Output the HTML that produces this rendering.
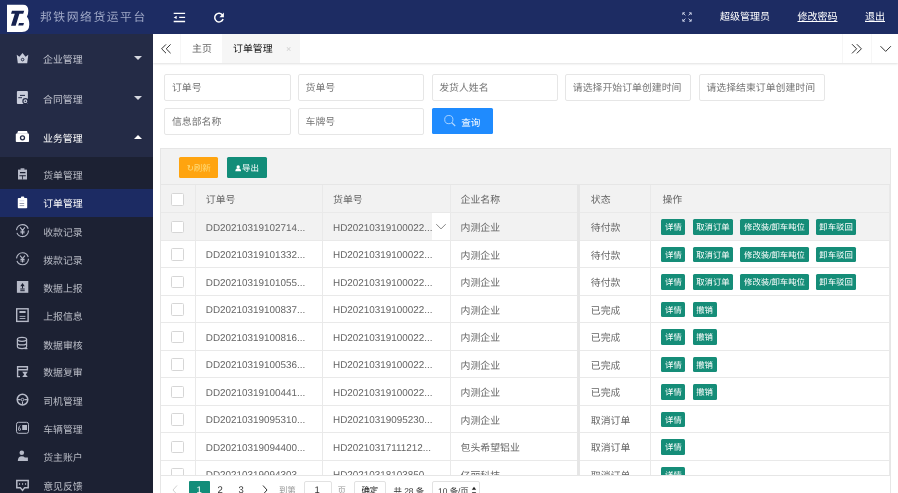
<!DOCTYPE html>
<html lang="zh-CN">
<head>
<meta charset="utf-8">
<title>邦铁网络货运平台</title>
<style>
*{box-sizing:border-box;margin:0;padding:0}
html,body{text-rendering:geometricPrecision;width:898px;height:493px;overflow:hidden;background:#fff;font-family:"Liberation Sans",sans-serif;font-size:9.8px;color:#666}
#app{position:relative;width:898px;height:493px;overflow:hidden;will-change:transform}
.abs{position:absolute}
/* header */
#hdr{left:0;top:0;width:898px;height:33.6px;background:#1d2c63;z-index:5}
#logo{left:7px;top:5px;width:23px;height:28px}
#title{left:40px;top:9px;font-size:11.8px;letter-spacing:1.55px;color:#9ea7c6;white-space:nowrap;line-height:16px}
.hr{top:11.2px;color:#fff;font-size:10px;line-height:14px;white-space:nowrap}
.hr.u{text-decoration:underline}
/* sidebar */
#side{left:0;top:33.6px;width:152.5px;height:460px;background:#242b46;z-index:4}
.top{position:absolute;left:0;width:152.5px;height:39.5px;line-height:39.5px;color:#c2c5d0;font-size:9.9px}
.top span{position:absolute;left:43px;top:2.2px}
.top .ic{position:absolute;left:16px;top:12px;width:14px;height:14px}
.top .ar{position:absolute;left:133.6px;top:17px;width:0;height:0;border-left:4.5px solid transparent;border-right:4.5px solid transparent;border-top:4.5px solid #d5d8e0}
.top .ar.up{border-top:none;border-bottom:4.5px solid #fff}
#child{left:0;top:123.6px;width:152.5px;height:340px;background:#1c2133}
.ci{position:absolute;left:0;width:152.5px;height:28.2px;line-height:28.2px;color:#b9bcc6;font-size:9.9px}
.ci span{position:absolute;left:43.2px;top:1.7px}
.ci .ic{position:absolute;left:15px;top:7px;width:14px;height:14px}
.ci.on{background:#1c2b63;color:#fff}
/* tabs */
#tabs{left:152.5px;top:33.6px;width:745.5px;height:29.4px;background:#fff;box-shadow:0 1px 2px rgba(0,0,0,.12);z-index:3}
.tab{position:absolute;top:0;height:29.4px;line-height:32.6px;font-size:9.9px;color:#666}
.vl{position:absolute;top:0;width:1px;height:29.4px;background:#f6f6f6}
/* form */
.inp{position:absolute;height:27px;width:126.3px;padding-top:1.8px;border:1px solid #e6e6e6;border-radius:2px;background:#fff;font-size:9.9px;color:#757575;line-height:24.5px;padding-left:6.6px;white-space:nowrap}
#sbtn{left:431.7px;top:108px;width:61.5px;height:26.3px;background:#1f8bfe;border-radius:1.5px;color:#fff;font-size:9.6px;line-height:32.4px}
/* table */
#tbox{left:160px;top:148.2px;width:731px;height:360px;border:1px solid #e6e6e6;background:#fff}
#tool{left:0;top:0;width:729px;height:36px;background:#f2f2f2;border-bottom:1px solid #e6e6e6}
.btn{position:absolute;top:8px;height:21px;line-height:23px;border-radius:1.5px;color:#fff;font-size:8.5px;text-align:center;white-space:nowrap}
table{border-collapse:collapse;table-layout:fixed;position:absolute;left:0;top:36px}
td,th{height:27.52px;border-right:1px solid #e9e9e9;border-bottom:1px solid #e9e9e9;font-size:9.9px;font-weight:normal;text-align:left;padding:1.2px 0 0 9.7px;color:#666;white-space:nowrap;overflow:hidden}
th{background:#f2f2f2;color:#666}
tr.hv td{background:#f2f2f2}
td:nth-child(2),td:nth-child(3){padding-top:3.2px}
.cb{display:block;width:13px;height:12.5px;border:1px solid #d6d6d6;border-radius:1.5px;background:#fff;margin-left:0.8px}
.ob{display:inline-block;height:15.5px;line-height:17.4px;overflow:hidden;padding:0 3.6px;background:#158d78;color:#fff;font-size:8.4px;border-radius:1.5px;margin-right:7.2px;vertical-align:middle}
#dd{left:270.7px;top:64px;width:18px;height:26.5px;background:#fff}
td.st,th.st{border-left:3px solid #e6e6e6;padding-left:11.2px}
th.op{padding-left:11.4px}
td:last-child{padding-left:10.4px}
/* pager */
#pager{left:160px;top:475.1px;width:731px;height:20px;background:#fff;border:1px solid #e6e6e6;z-index:2}
.pg{position:absolute;top:8.2px;font-size:9.5px;line-height:14px;color:#333;white-space:nowrap}
</style>
</head>
<body>
<div id="app">
<div id="hdr" class="abs">
<svg class="abs" style="left:0;top:0" width="60" height="34" viewBox="0 0 60 34">
<path d="M7 4.8H23Q28.3 4.8 28.3 10.6Q28.3 14.8 26.9 16.8Q29.3 19.2 29.3 24.6Q29.3 32.1 22 32.1H7Z" fill="#fff"/>
<path d="M12 10.8H24.2L23.2 13.8H19.4L15.7 25.7H11L14.8 13.8H11Z" fill="#16224f"/>
<path d="M19 23H24L23.2 25.6H18.2Z" fill="#16224f"/>
</svg>
<div id="title" class="abs">邦铁网络货运平台</div>
<svg class="abs" style="left:170px;top:8px" width="20" height="20" viewBox="0 0 20 20">
<g stroke="#fff" stroke-width="1.3" fill="none"><path d="M3.7 5.3H15.1M9.2 9.4H15.1M3.7 13.5H15.1"/></g>
<path d="M3.7 9.4L6.7 7.7V11.1Z" fill="#fff"/>
</svg>
<svg class="abs" style="left:209px;top:8px" width="20" height="20" viewBox="0 0 20 20">
<path d="M13.6 7.2A4.3 4.3 0 1 0 14.1 11" stroke="#fff" stroke-width="1.5" fill="none"/>
<path d="M14.9 4.6V9.2H10.4Z" fill="#fff"/>
</svg>
<svg class="abs" style="left:680px;top:10px" width="14" height="14" viewBox="0 0 14 14">
<g stroke="#cfd5ea" stroke-width="0.9" fill="none"><path d="M2.8 5V2.8H5M9 2.8H11.2V5M11.2 9V11.2H9M5 11.2H2.8V9M2.8 2.8L5.4 5.4M11.2 2.8L8.6 5.4M11.2 11.2L8.6 8.6M2.8 11.2L5.4 8.6"/></g>
</svg>
<div class="abs hr" style="left:720px">超级管理员</div>
<div class="abs hr u" style="left:797.5px">修改密码</div>
<div class="abs hr u" style="left:865px">退出</div>
</div>
<div id="side" class="abs">
<div class="top" style="top:5.65px"><span>企业管理</span><i class="ar "></i></div>
<div class="top" style="top:45.15px"><span>合同管理</span><i class="ar "></i></div>
<div class="top" style="top:84.65px;color:#fff"><span>业务管理</span><i class="ar up"></i></div>
<div id="child" class="abs">
<div class="ci" style="top:3.50px"><span style="top:2.7px">货单管理</span></div>
<div class="ci on" style="top:31.68px"><span style="top:1.7px">订单管理</span></div>
<div class="ci" style="top:59.86px"><span style="top:2.7px">收款记录</span></div>
<div class="ci" style="top:88.04px"><span style="top:2.7px">拨款记录</span></div>
<div class="ci" style="top:116.22px"><span style="top:2.7px">数据上报</span></div>
<div class="ci" style="top:144.40px"><span style="top:2.7px">上报信息</span></div>
<div class="ci" style="top:172.58px"><span style="top:3.7px">数据审核</span></div>
<div class="ci" style="top:200.76px"><span style="top:1.7px">数据复审</span></div>
<div class="ci" style="top:228.94px"><span style="top:2.7px">司机管理</span></div>
<div class="ci" style="top:257.12px"><span style="top:2.7px">车辆管理</span></div>
<div class="ci" style="top:285.30px"><span style="top:2.7px">货主账户</span></div>
<div class="ci" style="top:313.48px"><span style="top:3.7px">意见反馈</span></div>
</div>
</div>
<svg class="abs" style="left:0;top:0;z-index:6" width="40" height="493" viewBox="0 0 40 493">
<path d="M16.7 54.7L19.4 56.7L22.5 52.9L25.6 56.7L28.3 54.7L27.2 63.2H17.8Z" fill="#c9cddb"/>
<circle cx="22.6" cy="59.6" r="1.3" fill="#c9cddb" stroke="#242b46" stroke-width="1"/>
<rect x="16.9" y="91.1" width="11" height="12.8" rx="1" fill="#c9cddb"/>
<path d="M20 95.4H25M18.3 97.7H22" stroke="#242b46" stroke-width="1"/>
<circle cx="25.4" cy="101.2" r="2.5" fill="#c9cddb" stroke="#242b46" stroke-width="1.2"/>
<circle cx="25.4" cy="101.2" r="0.8" fill="#242b46"/>
<path d="M17.1 133.8L18 131.1H27L27.9 133.8Z" fill="#fff"/>
<rect x="15.8" y="133.6" width="13.2" height="8.5" rx="0.8" fill="#fff"/>
<circle cx="22.5" cy="137.8" r="2" fill="#fff" stroke="#242b46" stroke-width="1.3"/>
<rect x="18" y="169.6" width="9" height="9.9" fill="#b6bac8"/>
<rect x="20.6" y="168.3" width="3.8" height="1.6" fill="#b6bac8"/>
<path d="M20 172.6H25.4M19.4 175.7H25.8" stroke="#1c2133" stroke-width="1.1"/>
<path d="M22.5 175.7V179.5" stroke="#1c2133" stroke-width="0.8"/>
<rect x="17.8" y="197.9" width="9.4" height="10.3" rx="0.8" fill="#fff"/>
<rect x="20.9" y="196.6" width="3.4" height="2.2" rx="1" fill="#fff"/>
<path d="M19.6 200.8H24.2" stroke="#d5d9ea" stroke-width="1"/>
<path d="M19.6 203.5H24.2M19.6 205.6H24.2" stroke="#9a9eb0" stroke-width="1"/>
<g fill="none" stroke="#b6bac8" stroke-width="1.1">
<circle cx="22.5" cy="230.6" r="6" stroke-dasharray="16 2.85"/>
<path d="M20.1 227.4L22.5 230.4L24.9 227.4M22.5 230.4V234.4M20.4 231.2H24.6M20.4 232.8H24.6"/>
<circle cx="22.5" cy="258.8" r="6" stroke-dasharray="16 2.85"/>
<path d="M20.1 255.6L22.5 258.6L24.9 255.6M22.5 258.6V262.6M20.4 259.4H24.6M20.4 261H24.6"/>
</g>
<rect x="16.9" y="281" width="11.4" height="11.8" fill="#b6bac8"/>
<path d="M22.5 283L24.7 286.3H20.3Z" fill="#1c2133"/>
<path d="M22.5 286V288.4M20.3 289H24.7M20.3 290.7H24.7" stroke="#1c2133" stroke-width="1"/>
<rect x="16.7" y="308.8" width="11.4" height="12.6" fill="none" stroke="#b6bac8" stroke-width="1.4"/>
<rect x="19.4" y="311" width="6.2" height="2" fill="#b6bac8"/>
<path d="M19.6 316.4H25.4M19.6 318.5H25.4" stroke="#b6bac8" stroke-width="0.9"/>
<g fill="none" stroke="#b6bac8" stroke-width="1.2">
<ellipse cx="22" cy="339.3" rx="4.6" ry="2"/>
<path d="M17.4 339.3V346.6A4.6 2 0 0 0 26.6 346.6V339.3M17.4 342.9A4.6 2 0 0 0 26.6 342.9"/>
<path d="M24.5 348.6H27.4"/>
</g>
<path d="M20 376.6H17.6V366.8H27.4V369.8H17.6" fill="none" stroke="#b6bac8" stroke-width="1.4"/>
<path d="M22.2 371.8H27.8L25.8 374.4L27.8 377H22.2L24.2 374.4Z" fill="#b6bac8"/>
<g fill="none" stroke="#b6bac8">
<circle cx="22.5" cy="399.6" r="5.3" stroke-width="1.5"/>
<circle cx="22.5" cy="399.6" r="1.3" stroke-width="1"/>
<path d="M17.4 399.6H20.6M24.4 399.6H27.6M22.5 401.4V404.6" stroke-width="1.1"/>
</g>
<rect x="16.5" y="422.3" width="12" height="11" rx="2" fill="none" stroke="#b6bac8" stroke-width="1"/>
<rect x="22.2" y="425" width="4.8" height="5" fill="#b6bac8"/>
<path d="M20.4 425.6Q18.6 426 18.6 428.6A1 1.3 0 1 0 18.7 428.4" fill="none" stroke="#b6bac8" stroke-width="0.9"/>
<circle cx="21.8" cy="452.7" r="2.3" fill="#b6bac8"/>
<path d="M17.8 461Q17.8 456.2 21.8 456.2Q23.9 456.2 24.8 457.6H27.9V461Z" fill="#b6bac8"/>
<path d="M16.8 480.4H28.2V487.8H24.6L22.5 490.4L20.4 487.8H16.8Z" fill="none" stroke="#b6bac8" stroke-width="1.5"/>
<path d="M19 484H20.1M22 484H23.1M25 484H26.1" stroke="#b6bac8" stroke-width="1.6"/>
</svg>

<div id="tabs" class="abs">
<svg class="abs" style="left:5px;top:8.6px" width="16" height="14" viewBox="0 0 16 14"><path d="M8 2.4L3.6 6.8L8 11.2M12.6 2.4L8.2 6.8L12.6 11.2" fill="none" stroke="#333" stroke-width="1"/></svg>
<i class="vl" style="left:27.5px"></i>
<div class="tab" style="left:39.5px">主页</div>
<i class="vl" style="left:69.5px"></i>
<div class="tab" style="left:69.5px;width:78px;background:#f6f6f6;color:#111"><span style="position:absolute;left:11px">订单管理</span><span style="position:absolute;left:64px;top:-1px;color:#d0d0d0;font-size:9px">×</span></div>
<i class="vl" style="left:689.5px"></i>
<svg class="abs" style="left:696px;top:8px" width="16" height="14" viewBox="0 0 16 14"><path d="M3 2.2L7.6 6.8L3 11.4M7.8 2.2L12.4 6.8L7.8 11.4" fill="none" stroke="#333" stroke-width="1"/></svg>
<i class="vl" style="left:718.5px"></i>
<svg class="abs" style="left:725px;top:9px" width="16" height="12" viewBox="0 0 16 12"><path d="M2.5 3.2L7.7 8.4L12.9 3.2" fill="none" stroke="#333" stroke-width="1"/></svg>
</div>
<div class="inp" style="left:164.3px;top:73.9px">订单号</div>
<div class="inp" style="left:298.0px;top:73.9px">货单号</div>
<div class="inp" style="left:431.6px;top:73.9px">发货人姓名</div>
<div class="inp" style="left:565.2px;top:73.9px">请选择开始订单创建时间</div>
<div class="inp" style="left:698.9px;top:73.9px">请选择结束订单创建时间</div>
<div class="inp" style="left:164.3px;top:107.9px">信息部名称</div>
<div class="inp" style="left:298.0px;top:107.9px">车牌号</div>
<div id="sbtn" class="abs"><svg class="abs" style="left:11.3px;top:6.3px" width="14" height="14" viewBox="0 0 14 14"><circle cx="5.8" cy="5.6" r="4.1" fill="none" stroke="#b5d9ff" stroke-width="0.9"/><path d="M8.8 8.6L12.2 12" stroke="#b5d9ff" stroke-width="1.2"/></svg><span style="position:absolute;left:29.6px">查询</span></div>
<div id="tbox" class="abs">
<div id="tool" class="abs"><div class="btn" style="left:18.2px;width:39.2px;background:#ffa40f;color:#ffdc7a">↻刷新</div><div class="btn" style="left:66.4px;width:39.2px;background:#128d79"><svg style="vertical-align:-0.6px;margin-right:0.6px" width="6.4" height="6.4" viewBox="0 0 10 10"><circle cx="5" cy="3" r="2.6" fill="#fff"/><path d="M0.5 9.6Q0.5 5 5 5Q9.5 5 9.5 9.6Z" fill="#fff"/></svg>导出</div></div>
<table><colgroup><col style="width:34.7px"><col style="width:127.3px"><col style="width:127.5px"><col style="width:128px"><col style="width:72.5px"><col style="width:239px"></colgroup>
<tr><th><i class="cb"></i></th><th>订单号</th><th>货单号</th><th>企业名称</th><th class="st">状态</th><th class="op">操作</th></tr>
<tr class="hv"><td><i class="cb"></i></td><td>DD20210319102714...</td><td>HD20210319100022...</td><td>内测企业</td><td class="st">待付款</td><td><span class="ob">详情</span><span class="ob">取消订单</span><span class="ob">修改装/卸车吨位</span><span class="ob">卸车驳回</span></td></tr>
<tr><td><i class="cb"></i></td><td>DD20210319101332...</td><td>HD20210319100022...</td><td>内测企业</td><td class="st">待付款</td><td><span class="ob">详情</span><span class="ob">取消订单</span><span class="ob">修改装/卸车吨位</span><span class="ob">卸车驳回</span></td></tr>
<tr><td><i class="cb"></i></td><td>DD20210319101055...</td><td>HD20210319100022...</td><td>内测企业</td><td class="st">待付款</td><td><span class="ob">详情</span><span class="ob">取消订单</span><span class="ob">修改装/卸车吨位</span><span class="ob">卸车驳回</span></td></tr>
<tr><td><i class="cb"></i></td><td>DD20210319100837...</td><td>HD20210319100022...</td><td>内测企业</td><td class="st">已完成</td><td><span class="ob">详情</span><span class="ob">撤销</span></td></tr>
<tr><td><i class="cb"></i></td><td>DD20210319100816...</td><td>HD20210319100022...</td><td>内测企业</td><td class="st">已完成</td><td><span class="ob">详情</span><span class="ob">撤销</span></td></tr>
<tr><td><i class="cb"></i></td><td>DD20210319100536...</td><td>HD20210319100022...</td><td>内测企业</td><td class="st">已完成</td><td><span class="ob">详情</span><span class="ob">撤销</span></td></tr>
<tr><td><i class="cb"></i></td><td>DD20210319100441...</td><td>HD20210319100022...</td><td>内测企业</td><td class="st">已完成</td><td><span class="ob">详情</span><span class="ob">撤销</span></td></tr>
<tr><td><i class="cb"></i></td><td>DD20210319095310...</td><td>HD20210319095230...</td><td>内测企业</td><td class="st">取消订单</td><td><span class="ob">详情</span></td></tr>
<tr><td><i class="cb"></i></td><td>DD20210319094400...</td><td>HD20210317111212...</td><td>包头希望铝业</td><td class="st">取消订单</td><td><span class="ob">详情</span></td></tr>
<tr><td><i class="cb"></i></td><td>DD20210319094303...</td><td>HD20210318103850...</td><td>亿丽科技</td><td class="st">取消订单</td><td><span class="ob">详情</span></td></tr>
<tr><td><i class="cb"></i></td><td>DD20210319093512...</td><td>HD20210318103850...</td><td>亿丽科技</td><td class="st">取消订单</td><td><span class="ob">详情</span></td></tr>
</table>
<div class="abs" id="dd"><svg width="18" height="26" viewBox="0 0 18 26"><path d="M4.3 11.2L9 15.9L13.7 11.2" fill="none" stroke="#777" stroke-width="0.9"/></svg></div>
</div>
<div id="pager" class="abs">
<svg class="abs" style="left:10px;top:8px" width="8" height="12" viewBox="0 0 8 12"><path d="M6 1.5L2 6L6 10.5" fill="none" stroke="#d2d2d2" stroke-width="1"/></svg>
<div class="abs" style="left:28px;top:5px;width:21px;height:20px;background:#128d79;border-radius:1px"></div>
<div class="pg" style="left:35.5px;color:#fff">1</div>
<div class="pg" style="left:56.5px">2</div>
<div class="pg" style="left:77.5px">3</div>
<svg class="abs" style="left:100px;top:8px" width="8" height="12" viewBox="0 0 8 12"><path d="M2 1.5L6 6L2 10.5" fill="none" stroke="#333" stroke-width="1"/></svg>
<div class="pg" style="left:118px;color:#999;font-size:8.4px;top:7.4px">到第</div>
<div class="abs" style="left:142.5px;top:4.8px;width:28px;height:20px;border:1px solid #e2e2e2;border-radius:2px"></div>
<div class="pg" style="left:153.5px">1</div>
<div class="pg" style="left:176.5px;color:#999;font-size:8.4px;top:7.4px">页</div>
<div class="abs" style="left:193px;top:4.8px;width:32px;height:20px;border:1px solid #e2e2e2;border-radius:2px"></div>
<div class="pg" style="left:200.5px;font-size:8.4px;top:7.4px;color:#222">确定</div>
<div class="pg" style="left:232.5px;font-size:8.4px;top:7.6px">共 28 条</div>
<div class="abs" style="left:271px;top:4.8px;width:47.5px;height:20px;border:1px solid #e2e2e2;border-radius:2px"></div>
<div class="pg" style="left:277px;font-size:8.4px;top:7.6px">10 条/页</div>
<svg class="abs" style="left:310px;top:9.8px" width="6" height="10" viewBox="0 0 6 10"><path d="M3 0.8L5.2 3.8H0.8ZM3 9.2L5.2 6.2H0.8Z" fill="#222"/></svg>
</div>
</div>
</body>
</html>
